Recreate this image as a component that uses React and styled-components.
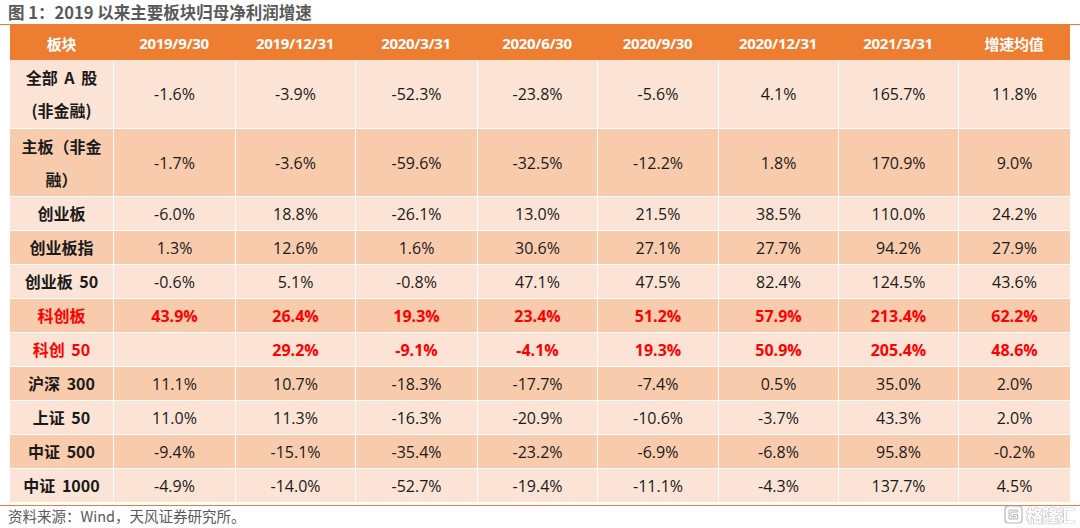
import React from 'react'
import styled, { createGlobalStyle } from 'styled-components'

const Global = createGlobalStyle`
  body {
    margin:0;
    background:#fff;
    font-family:'Open Sans','Noto Sans CJK SC',sans-serif;
  }
`
const COLS = '103px 122px 120px 122px 120px 121px 120px 120px 112px'

const Page = styled.div`
  position:relative;
  width:1080px;
  height:528px;
  overflow:hidden;
`
const Title = styled.div`
  height:24px;
  padding:0 0 0 8px;
  font-family:'Noto Sans CJK SC',sans-serif;
  font-size:16.5px;
  font-weight:700;
  line-height:24px;
  color:#595959;
  border-bottom:1px solid #ED7D31;
`
const Table = styled.div`
  margin:0 10px 0 10px;
  width:1060px;
`
const Head = styled.div`
  display:grid;
  grid-template-columns:${COLS};
  height:35px;
  background-color:#ED7D31;
`
const HeadCell = styled.div`
  display:flex;
  align-items:center;
  justify-content:center;
  color:#fff;
  font-size:15px;
  font-weight:700;
  font-family:${p => p.$cjk ? "'Noto Sans CJK SC',sans-serif" : "'Open Sans','Noto Sans CJK SC',sans-serif"};
  letter-spacing:-0.3px;
  padding-top:1px;
`
const Row = styled.div`
  display:grid;
  grid-template-columns:${COLS};
  height:${p => p.$tall ? 68 : 34}px;
  background-color:${p => p.$dark ? '#F8CBAD' : '#FBE4D5'};
  border-top:${p => p.$first ? 0 : 1}px solid #fff;
  box-sizing:border-box;
`
const Cell = styled.div`
  display:flex;
  align-items:center;
  justify-content:center;
  border-left:1px solid #fff;
  font-size:16px;
  font-weight:${p => p.$red ? 700 : 400};
  color:${p => p.$red ? '#FF0000' : '#1a1a1a'};
  &:first-child {
    border-left:0;
  }
`
const Name = styled.div`
  display:flex;
  flex-direction:column;
  align-items:center;
  justify-content:center;
  text-align:center;
  font-family:'Noto Sans CJK SC',sans-serif;
  font-size:16px;
  font-weight:700;
  line-height:33px;
  word-spacing:3px;
  white-space:nowrap;
  color:${p => p.$red ? '#FF0000' : '#1a1a1a'};
`
const Rule = styled.div`
  height:1px;
  margin-top:3px;
  background-color:#ED7D31;
`
const Source = styled.div`
  padding:1px 0 0 8px;
  font-family:'Noto Sans CJK SC',sans-serif;
  font-size:14.5px;
  line-height:18px;
  color:#595959;
`
const Mark = styled.div`
  position:absolute;
  right:6px;
  bottom:1px;
  display:flex;
  align-items:center;
  gap:3px;
  opacity:0.85;
`
const MarkText = styled.span`
  font-family:'Noto Sans CJK SC',sans-serif;
  font-size:17px;
  font-weight:700;
  color:#fff;
  letter-spacing:-1px;
  text-shadow:0 0 1px #999, 0 0 1px #999, 0 0 1px #999;
`

const heads = ['板块', '2019/9/30', '2019/12/31', '2020/3/31', '2020/6/30', '2020/9/30', '2020/12/31', '2021/3/31', '增速均值']

const rows = [
  { name: ['全部 A 股', '(非金融)'], tall: true, vals: ['-1.6%', '-3.9%', '-52.3%', '-23.8%', '-5.6%', '4.1%', '165.7%', '11.8%'] },
  { name: ['主板（非金', '融）'], tall: true, vals: ['-1.7%', '-3.6%', '-59.6%', '-32.5%', '-12.2%', '1.8%', '170.9%', '9.0%'] },
  { name: ['创业板'], vals: ['-6.0%', '18.8%', '-26.1%', '13.0%', '21.5%', '38.5%', '110.0%', '24.2%'] },
  { name: ['创业板指'], vals: ['1.3%', '12.6%', '1.6%', '30.6%', '27.1%', '27.7%', '94.2%', '27.9%'] },
  { name: ['创业板 50'], vals: ['-0.6%', '5.1%', '-0.8%', '47.1%', '47.5%', '82.4%', '124.5%', '43.6%'] },
  { name: ['科创板'], red: true, vals: ['43.9%', '26.4%', '19.3%', '23.4%', '51.2%', '57.9%', '213.4%', '62.2%'] },
  { name: ['科创 50'], red: true, vals: ['', '29.2%', '-9.1%', '-4.1%', '19.3%', '50.9%', '205.4%', '48.6%'] },
  { name: ['沪深 300'], vals: ['11.1%', '10.7%', '-18.3%', '-17.7%', '-7.4%', '0.5%', '35.0%', '2.0%'] },
  { name: ['上证 50'], vals: ['11.0%', '11.3%', '-16.3%', '-20.9%', '-10.6%', '-3.7%', '43.3%', '2.0%'] },
  { name: ['中证 500'], vals: ['-9.4%', '-15.1%', '-35.4%', '-23.2%', '-6.9%', '-6.8%', '95.8%', '-0.2%'] },
  { name: ['中证 1000'], vals: ['-4.9%', '-14.0%', '-52.7%', '-19.4%', '-11.1%', '-4.3%', '137.7%', '4.5%'] },
]

const Logo = () => (
  <svg width='19' height='19' viewBox='0 0 19 19'>
    <rect x='1' y='1' width='17' height='17' rx='3.5' fill='#fff' stroke='#aaa' strokeWidth='1.2' />
    <path d='M13.5 5 H5 V14 H13.5 V9.5 H9.5 V11.5 H11.5 V12 H7 V7 H13.5 Z' fill='#fff' stroke='#aaa' strokeWidth='1' />
  </svg>
)

export default function App() {
  return (
    <Page>
      <Global />
      <Title>图 1：2019 以来主要板块归母净利润增速</Title>
      <Table>
        <Head>
          {heads.map((h, i) => (
            <HeadCell key={h} $cjk={i === 0 || i === 8}>{h}</HeadCell>
          ))}
        </Head>
        {rows.map((r, i) => (
          <Row key={r.name.join('')} $tall={r.tall} $dark={i % 2 === 1} $first={i === 0}>
            <Cell>
              <Name $red={r.red}>{r.name.map(l => <div key={l}>{l}</div>)}</Name>
            </Cell>
            {r.vals.map((v, j) => (
              <Cell key={j} $red={r.red}>{v}</Cell>
            ))}
          </Row>
        ))}
      </Table>
      <Rule />
      <Source>资料来源：Wind，天风证券研究所。</Source>
      <Mark>
        <Logo />
        <MarkText>格隆汇</MarkText>
      </Mark>
    </Page>
  )
}
